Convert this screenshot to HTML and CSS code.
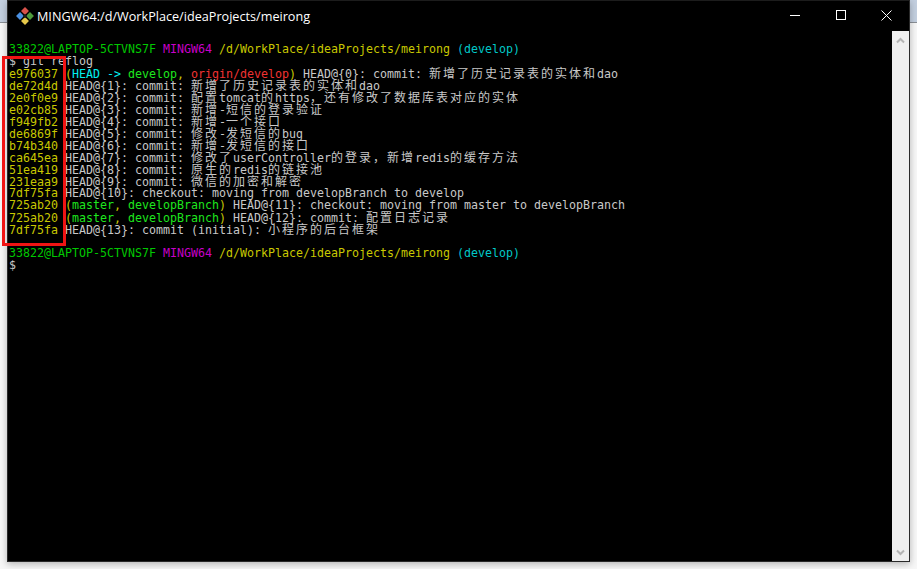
FILE: index.html
```html
<!DOCTYPE html>
<html lang="zh">
<head>
<meta charset="utf-8">
<title>MINGW64:/d/WorkPlace/ideaProjects/meirong</title>
<link rel="stylesheet" href="styles.css">
</head>
<body>
<div class="window">
  <header class="titlebar">
    <svg class="app-icon" width="18" height="18" viewBox="0 0 18 18">
      <rect x="6.2" y="1.2" width="5.6" height="5.6" transform="rotate(45 9 4)" fill="#d8524a"/>
      <rect x="1.2" y="6.2" width="5.6" height="5.6" transform="rotate(45 4 9)" fill="#4a90e2"/>
      <rect x="11.2" y="6.2" width="5.6" height="5.6" transform="rotate(45 14 9)" fill="#4f9a3c"/>
      <rect x="6.2" y="11.2" width="5.6" height="5.6" transform="rotate(45 9 14)" fill="#e6c84a"/>
      <rect x="7.4" y="7.4" width="3.2" height="3.2" transform="rotate(45 9 9)" fill="#1a1a1a"/>
    </svg>
    <span class="title">MINGW64:/d/WorkPlace/ideaProjects/meirong</span>
    <div class="controls">
      <button class="ctl"><svg width="10" height="10" viewBox="0 0 10 10"><path d="M0 5.5H10" stroke="#fff" fill="none"/></svg></button>
      <button class="ctl"><svg width="10" height="10" viewBox="0 0 10 10"><rect x=".5" y=".5" width="9" height="9" stroke="#fff" fill="none"/></svg></button>
      <button class="ctl"><svg width="11" height="11" viewBox="0 0 11 11"><path d="M.5 .5L10.5 10.5M10.5 .5L.5 10.5" stroke="#fff" fill="none"/></svg></button>
    </div>
  </header>
  <div class="body">
    <main class="terminal">
      <div class="line"></div>
      <div class="line"><span class="g">33822@LAPTOP-5CTVNS7F</span> <span class="m">MINGW64</span> <span class="y">/d/WorkPlace/ideaProjects/meirong</span> <span class="t">(develop)</span></div>
      <div class="line">$ git reflog</div>
      <div class="line"><span class="y">e976037</span> <span class="y">(</span><span class="bc">HEAD -&gt; </span><span class="bg">develop</span><span class="y">, </span><span class="br">origin/develop</span><span class="y">)</span> HEAD@{0}: commit: <span class="c">新增了历史记录表的实体和</span>dao</div>
      <div class="line"><span class="y">de72d4d</span> HEAD@{1}: commit: <span class="c">新增了历史记录表的实体和</span>dao</div>
      <div class="line"><span class="y">2e0f0e9</span> HEAD@{2}: commit: <span class="c">配置</span>tomcat<span class="c">的</span>https<span class="c">，还有修改了数据库表对应的实体</span></div>
      <div class="line"><span class="y">e02cb85</span> HEAD@{3}: commit: <span class="c">新增</span>-<span class="c">短信的登录验证</span></div>
      <div class="line"><span class="y">f949fb2</span> HEAD@{4}: commit: <span class="c">新增</span>-<span class="c">一个接口</span></div>
      <div class="line"><span class="y">de6869f</span> HEAD@{5}: commit: <span class="c">修改</span>-<span class="c">发短信的</span>bug</div>
      <div class="line"><span class="y">b74b340</span> HEAD@{6}: commit: <span class="c">新增</span>-<span class="c">发短信的接口</span></div>
      <div class="line"><span class="y">ca645ea</span> HEAD@{7}: commit: <span class="c">修改了</span>userController<span class="c">的登录，新增</span>redis<span class="c">的缓存方法</span></div>
      <div class="line"><span class="y">51ea419</span> HEAD@{8}: commit: <span class="c">原生的</span>redis<span class="c">的链接池</span></div>
      <div class="line"><span class="y">231eaa9</span> HEAD@{9}: commit: <span class="c">微信的加密和解密</span></div>
      <div class="line"><span class="y">7df75fa</span> HEAD@{10}: checkout: moving from developBranch to develop</div>
      <div class="line"><span class="y">725ab20</span> <span class="y">(</span><span class="bg">master</span><span class="y">, </span><span class="bg">developBranch</span><span class="y">)</span> HEAD@{11}: checkout: moving from master to developBranch</div>
      <div class="line"><span class="y">725ab20</span> <span class="y">(</span><span class="bg">master</span><span class="y">, </span><span class="bg">developBranch</span><span class="y">)</span> HEAD@{12}: commit: <span class="c">配置日志记录</span></div>
      <div class="line"><span class="y">7df75fa</span> HEAD@{13}: commit (initial): <span class="c">小程序的后台框架</span></div>
      <div class="line"></div>
      <div class="line"><span class="g">33822@LAPTOP-5CTVNS7F</span> <span class="m">MINGW64</span> <span class="y">/d/WorkPlace/ideaProjects/meirong</span> <span class="t">(develop)</span></div>
      <div class="line">$</div>
    </main>
    <aside class="scrollbar">
      <svg width="9" height="7" viewBox="0 0 9 7"><path d="M1 5.5L4.5 2L8 5.5" stroke="#b4b4b4" stroke-width="2" fill="none"/></svg>
      <svg width="9" height="7" viewBox="0 0 9 7"><path d="M1 1.5L4.5 5L8 1.5" stroke="#b4b4b4" stroke-width="2" fill="none"/></svg>
    </aside>
  </div>
</div>
<div class="annotation"></div>
</body>
</html>
```
FILE: styles.css
```css
* { box-sizing: border-box; }
html, body { margin: 0; height: 100%; overflow: hidden; }
body {
  position: relative;
  width: 917px;
  height: 569px;
  padding: 0 7px 7px;
  background: linear-gradient(#c3cfdf 0, #c3cfdf 22px, #8a8f96 22px, #8a8f96 23px, #f7f7f7 23px);
}
.window {
  display: flex;
  flex-direction: column;
  height: 562px;
  background: #000;
  border: 1px solid #2a2a2a;
  border-top-color: #1c1c1c;
  box-shadow: 0 2px 7px rgba(0, 0, 0, .28);
}
.titlebar {
  display: flex;
  align-items: center;
  height: 30px;
  flex: none;
  padding-left: 8px;
  background: #000;
}
.app-icon { flex: none; margin-right: 3px; }
.title {
  font-family: "Open Sans", "Noto Sans", sans-serif;
  font-size: 12.65px;
  color: #fff;
  white-space: nowrap;
}
.controls { display: flex; align-self: flex-start; margin-left: auto; }
.ctl {
  display: flex;
  align-items: center;
  justify-content: center;
  width: 45.5px;
  height: 28px;
  padding: 0;
  border: 0;
  background: transparent;
}
.body { display: flex; flex: 1; min-height: 0; }
.terminal {
  flex: 1;
  padding-left: 1px;
  font-family: "DejaVu Sans Mono", "Noto Sans CJK SC", monospace;
  font-size: 11.63px;
  line-height: 12px;
  color: #c8c8c8;
  overflow: hidden;
}
.line { height: 12px; white-space: pre; }
.c {
  display: inline-block;
  height: 12px;
  font-family: "Noto Sans CJK SC", sans-serif;
  font-size: 12px;
  line-height: 12px;
  letter-spacing: 2px;
}
.g { color: #00c800; }
.m { color: #c800c8; }
.y { color: #c8c800; }
.t { color: #00c8c8; }
.bc { color: #00f0f0; }
.bg { color: #1ee61e; }
.br { color: #f03232; }
.scrollbar {
  display: flex;
  flex-direction: column;
  justify-content: space-between;
  align-items: center;
  flex: none;
  width: 17px;
  padding: 6px 0 5px;
  background: #efefef;
}
.annotation {
  position: absolute;
  left: 2px;
  top: 56px;
  width: 64px;
  height: 190px;
  border: 3px solid #f01414;
}
```
